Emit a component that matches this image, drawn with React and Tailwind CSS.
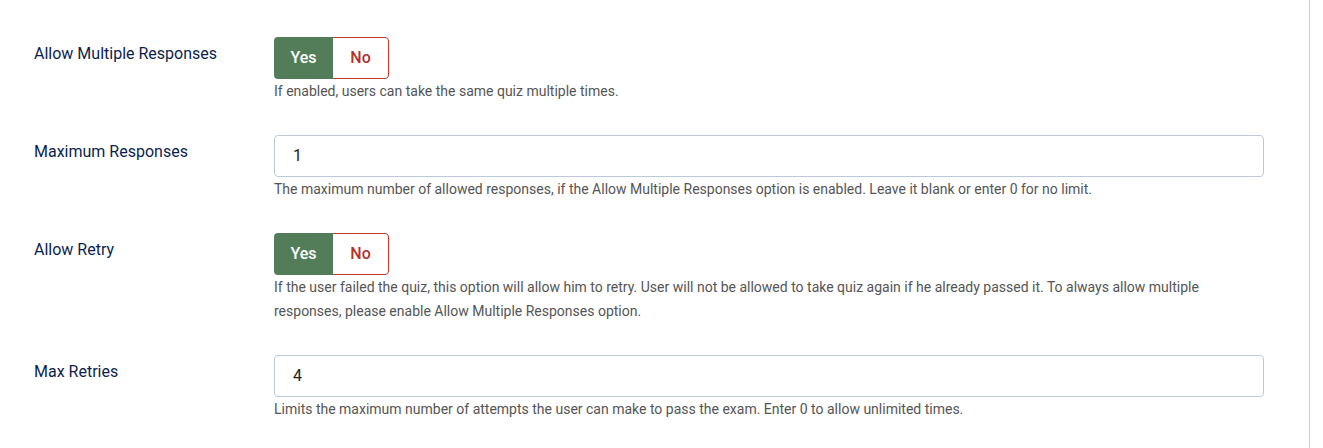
import React from "react";

function Toggle() {
  return (
    <div className="flex h-[42px] w-[115px] overflow-hidden rounded-[4px]">
      <div className="flex w-[59px] items-center justify-center bg-[#537d58] text-[16px] font-medium text-white">Yes</div>
      <div className="flex flex-1 items-center justify-center rounded-r-[4px] border border-l-0 border-[#c0392b] text-[16px] font-medium text-[#b3322a]">No</div>
    </div>
  );
}

function Input({ value }) {
  return (
    <div className="flex h-[42px] w-[990px] items-center rounded-[4px] border border-[#bcc8dc] pl-[18px] text-[16px] text-[#222]">
      {value}
    </div>
  );
}

function Row({ label, children, help }) {
  return (
    <div className="mb-[32px] flex">
      <div className="w-[240px] pt-[5px] text-[16px] leading-[24px] text-[#0d1f4c]">{label}</div>
      <div className="flex flex-col">
        {children}
        <div className="w-[990px] text-[14px] leading-[24px] text-[#555]">{help}</div>
      </div>
    </div>
  );
}

export default function App() {
  return (
    <div className="flex h-[448px] w-[1323px] overflow-hidden bg-white" style={{ fontFamily: "Roboto, 'Liberation Sans', sans-serif" }}>
      <div className="h-full w-[1310px] border-r border-[#c6d0e1] pl-[34px] pt-[37px]">
        <Row label="Allow Multiple Responses" help="If enabled, users can take the same quiz multiple times.">
          <Toggle />
        </Row>
        <Row label="Maximum Responses" help="The maximum number of allowed responses, if the Allow Multiple Responses option is enabled. Leave it blank or enter 0 for no limit.">
          <Input value="1" />
        </Row>
        <Row label="Allow Retry" help="If the user failed the quiz, this option will allow him to retry. User will not be allowed to take quiz again if he already passed it. To always allow multiple responses, please enable Allow Multiple Responses option.">
          <Toggle />
        </Row>
        <Row label="Max Retries" help="Limits the maximum number of attempts the user can make to pass the exam. Enter 0 to allow unlimited times.">
          <Input value="4" />
        </Row>
      </div>
    </div>
  );
}
